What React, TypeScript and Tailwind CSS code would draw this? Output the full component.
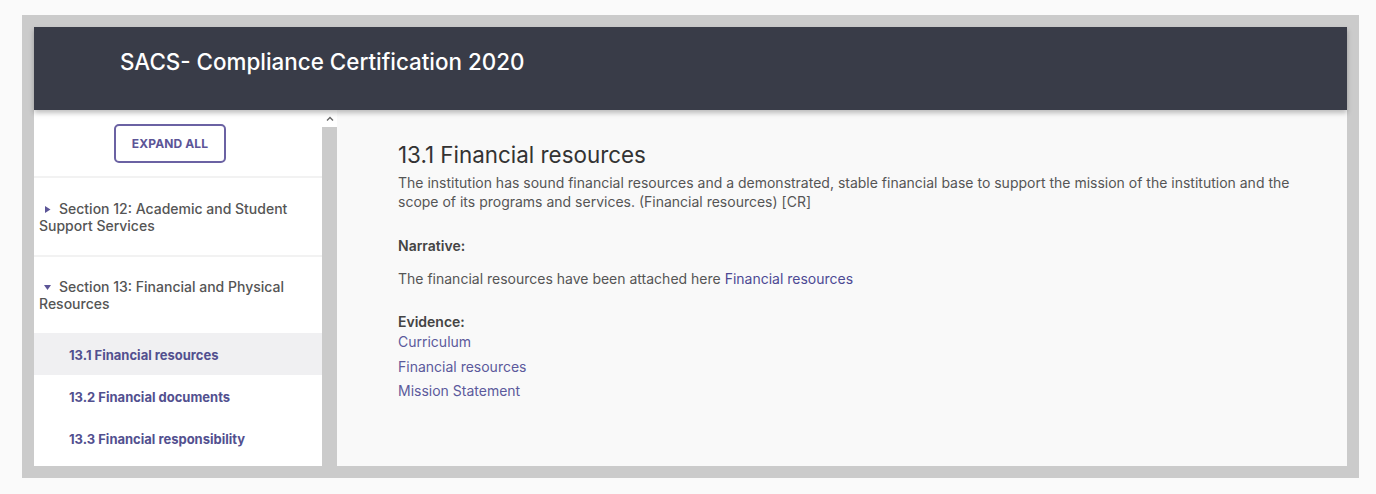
import React from 'react';

const font = { fontFamily: 'Inter, "Noto Sans", sans-serif' };

const subItems = ['13.1 Financial resources', '13.2 Financial documents', '13.3 Financial responsibility'];

const Caret: React.FC<{ open?: boolean }> = ({ open }) => (
  <svg width="7" height="7" viewBox="0 0 7 7" className="inline-block ml-[5px] mr-[8px] align-[1px]">
    {open ? <path d="M0 1 L7 1 L3.5 6 Z" fill="#5c5597" /> : <path d="M1 0 L6.5 3.5 L1 7 Z" fill="#5c5597" />}
  </svg>
);

const Sidebar: React.FC = () => (
  <div className="w-[288px] bg-white flex flex-col overflow-hidden">
    <div className="h-[68px] flex items-center pl-[80px] border-b-2 border-[#f2f2f2]">
      <button className="w-[112px] h-[39px] mt-[1px] rounded-[5px] border-2 border-[#6b62a3] text-[12px] font-bold text-[#5c5597] tracking-[0.01em]">
        EXPAND ALL
      </button>
    </div>
    <div className="h-[79px] border-b-2 border-[#f2f2f2] flex items-center pl-[5px] pr-4 text-[14px] leading-[17px] text-[#555] font-medium">
      <p>
        <Caret />Section 12: Academic and Student Support Services
      </p>
    </div>
    <div className="h-[76px] flex items-center pl-[5px] pr-4 text-[14px] leading-[17px] text-[#555] font-medium">
      <p>
        <Caret open />Section 13: Financial and Physical Resources
      </p>
    </div>
    {subItems.map((s, i) => (
      <div
        key={s}
        className={`h-[42px] flex items-center pl-[35px] pt-[3px] text-[13px] font-bold text-[#52508f] ${i === 0 ? 'bg-[#f0f0f2]' : ''}`}
      >
        {s}
      </div>
    ))}
  </div>
);

const ScrollBar: React.FC = () => (
  <div className="w-[15px] flex flex-col bg-white">
    <div className="h-[17px] flex items-center justify-center">
      <svg width="8" height="6" viewBox="0 0 8 6">
        <path d="M1 4.5 L4 1.5 L7 4.5" fill="none" stroke="#666" strokeWidth="1.4" />
      </svg>
    </div>
    <div className="flex-1 bg-[#cbcbcb]" />
  </div>
);

const Main: React.FC = () => (
  <div className="flex-1 bg-[#f9f9f9] pl-[61px] pr-[50px] pt-[30px] text-[14px] text-[#555]">
    <h1 className="text-[22.4px] leading-[30px] text-[#333]">13.1 Financial resources</h1>
    <p className="leading-[19px] mt-[3px] max-w-[905px]">
      The institution has sound financial resources and a demonstrated, stable financial base to support the mission of the institution and the scope of its programs and services. (Financial resources) [CR]
    </p>
    <p className="font-semibold text-[#444] mt-[25px] leading-[19px]">Narrative:</p>
    <p className="mt-[14px] leading-[19px]">
      The financial resources have been attached here <a className="text-[#4d4a94]">Financial resources</a>
    </p>
    <p className="font-semibold text-[#444] mt-[24px] leading-[19px]">Evidence:</p>
    <div className="flex flex-col text-[#5c5a9c] leading-[19px] mt-[1px]">
      <a>Curriculum</a>
      <a className="mt-[6px]">Financial resources</a>
      <a className="mt-[5px]">Mission Statement</a>
    </div>
  </div>
);

export default function App() {
  return (
    <div className="min-h-screen bg-[#fafafa] px-[22px] pt-[15px]" style={font}>
      <div className="w-[1337px] h-[463px] border-[12px] border-[#cbcbcb] flex flex-col">
        <div className="h-[83px] bg-[#393c48] flex items-center pl-[86px] relative z-10 shadow-[0_3px_5px_rgba(0,0,0,0.25)]">
          <h2 className="text-white text-[22.4px] font-medium mt-[-13px]">SACS- Compliance Certification 2020</h2>
        </div>
        <div className="flex flex-1 min-h-0">
          <Sidebar />
          <ScrollBar />
          <Main />
        </div>
      </div>
    </div>
  );
}
